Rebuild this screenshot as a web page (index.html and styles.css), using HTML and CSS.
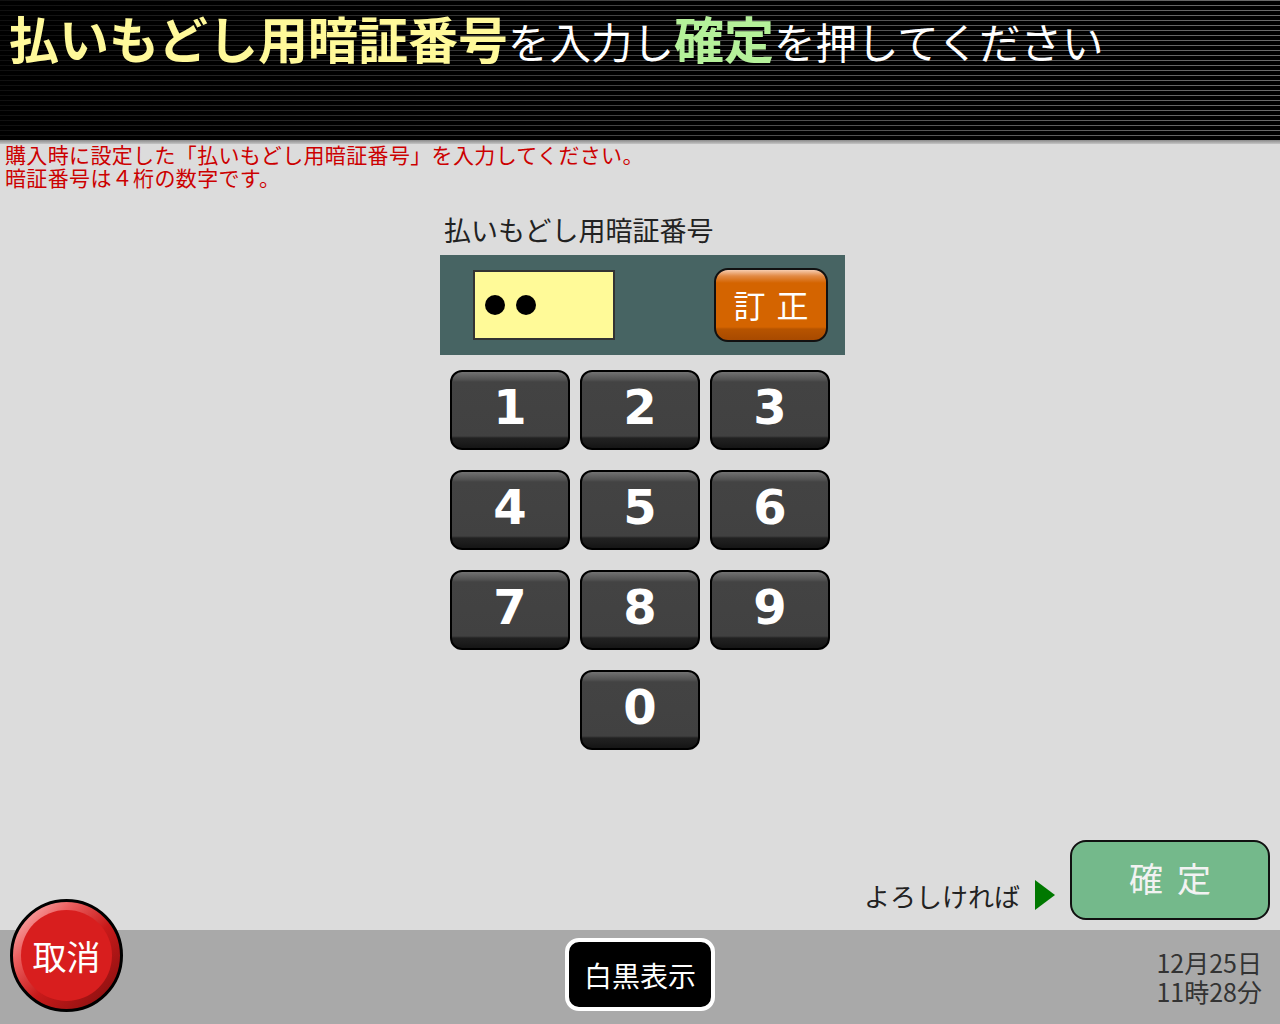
FILE: index.html
```html
<!DOCTYPE html>
<html lang="ja">
<head>
<meta charset="utf-8">
<title>払いもどし用暗証番号</title>
<link rel="stylesheet" href="styles.css">
</head>
<body>
<div class="screen">
  <header class="header">
    <h1 class="title"><span class="hl-y">払いもどし用暗証番号</span><span class="plain">を入力し</span><span class="hl-g">確定</span><span class="plain">を押してください</span></h1>
  </header>
  <div class="header-edge"></div>
  <main class="main">
    <p class="notice">購入時に設定した「払いもどし用暗証番号」を入力してください。<br>暗証番号は４桁の数字です。</p>
    <section class="pin">
      <div class="pin-label">払いもどし用暗証番号</div>
      <div class="pin-panel">
        <div class="pin-field"><span class="dot"></span><span class="dot"></span></div>
        <button class="btn-correct">訂正</button>
      </div>
      <div class="keypad">
        <button class="key">1</button>
        <button class="key">2</button>
        <button class="key">3</button>
        <button class="key">4</button>
        <button class="key">5</button>
        <button class="key">6</button>
        <button class="key">7</button>
        <button class="key">8</button>
        <button class="key">9</button>
        <button class="key key-zero">0</button>
      </div>
    </section>
    <div class="confirm-row">
      <span class="prompt">よろしければ</span>
      <span class="arrow"></span>
      <button class="btn-confirm">確定</button>
    </div>
  </main>
  <footer class="footer">
    <button class="btn-cancel"><span class="cancel-face">取消</span></button>
    <button class="btn-mono">白黒表示</button>
    <div class="datetime">12月25日<br>11時28分</div>
  </footer>
</div>
</body>
</html>
```

FILE: styles.css
```css
* { box-sizing: border-box; }
html, body { margin: 0; padding: 0; }
body {
  width: 1280px;
  height: 1024px;
  overflow: hidden;
  background: #dcdcdc;
  font-family: "Noto Sans CJK JP", "Noto Sans", sans-serif;
}
button {
  font-family: "Noto Sans CJK JP", "Noto Sans", sans-serif;
  margin: 0;
  cursor: pointer;
}
.screen {
  display: flex;
  flex-direction: column;
  height: 1024px;
}

/* header */
.header {
  flex: none;
  height: 140px;
  padding: 7px 0 0 9px;
  background:
    linear-gradient(to right, rgba(0,0,0,0.85) 0%, rgba(0,0,0,0.35) 50%, rgba(0,0,0,0) 100%),
    repeating-linear-gradient(to bottom, #6a6a6a 0 1px, #000 1px 5px);
}
.title {
  margin: 0;
  font-weight: normal;
  line-height: 60px;
  white-space: nowrap;
}
.hl-y, .hl-g {
  font-size: 50px;
  font-weight: 700;
}
.hl-y { color: #fff99a; }
.hl-g { color: #b5f19a; }
.plain {
  font-size: 41.5px;
  color: #ffffff;
}
.header-edge {
  flex: none;
  height: 4px;
  background: linear-gradient(to bottom, #8a8a8a, #c4c4c4);
}

/* main */
.main {
  flex: 1;
  min-height: 0;
  display: flex;
  flex-direction: column;
}
.notice {
  margin: -1px 0 0 5px;
  font-size: 21px;
  letter-spacing: 0.35px;
  line-height: 23px;
  color: #cc0000;
}
.pin {
  margin: 26px 0 0 440px;
  width: 405px;
}
.pin-label {
  padding-left: 4px;
  font-size: 27px;
  line-height: 30px;
  color: #222;
}
.pin-panel {
  margin-top: 10px;
  height: 100px;
  background: #476463;
  display: flex;
  align-items: center;
  justify-content: space-between;
  padding: 0 17px 0 33px;
}
.pin-field {
  width: 142px;
  height: 70px;
  border: 2px solid #333;
  background: #fffa98;
  display: flex;
  align-items: center;
  gap: 11px;
  padding-left: 10px;
}
.dot {
  width: 20px;
  height: 20px;
  border-radius: 50%;
  background: #000;
}
.btn-correct {
  width: 114px;
  height: 74px;
  border: 2px solid #111;
  border-radius: 14px;
  background: linear-gradient(to bottom, #f7cdb0 0, #e28a45 6px, #d46400 13px, #d46400 calc(100% - 13px), #b75400 calc(100% - 11px), #a84a00 100%);
  color: #fff;
  font-size: 32px;
  letter-spacing: 11px;
  padding: 0 0 2px 11px;
}
.keypad {
  margin: 15px 0 0 10px;
  display: grid;
  grid-template-columns: repeat(3, 120px);
  grid-auto-rows: 80px;
  column-gap: 10px;
  row-gap: 20px;
}
.key {
  border: 2px solid #000;
  border-radius: 12px;
  background: linear-gradient(to bottom, #727272 0, #505050 8px, #434343 10px, #414141 calc(100% - 12px), #222 calc(100% - 10px), #151515 100%);
  color: #fff;
  font-family: "DejaVu Sans", "Liberation Sans", sans-serif;
  font-weight: bold;
  font-size: 48px;
  padding: 0 0 6px;
  display: flex;
  align-items: center;
  justify-content: center;
}
.key-zero { grid-column: 2; }

.confirm-row {
  margin-top: auto;
  display: flex;
  justify-content: flex-end;
  align-items: flex-end;
  padding: 0 10px 10px 0;
}
.prompt {
  font-size: 26px;
  line-height: 30px;
  color: #222;
  margin-bottom: 9px;
}
.arrow {
  width: 0;
  height: 0;
  border-top: 15px solid transparent;
  border-bottom: 15px solid transparent;
  border-left: 20px solid #007800;
  margin: 0 15px 10px 15px;
}
.btn-confirm {
  width: 200px;
  height: 80px;
  border: 2px solid #111;
  border-radius: 16px;
  background: #74b98b;
  color: #f2f2f2;
  font-size: 34px;
  letter-spacing: 14px;
  padding: 0 0 5px 14px;
}

/* footer */
.footer {
  flex: none;
  height: 94px;
  position: relative;
  background: #a9a9a9;
  display: grid;
  grid-template-columns: 1fr auto 1fr;
  align-items: start;
  padding-top: 8px;
}
.btn-cancel {
  position: absolute;
  left: 10px;
  top: -31px;
  width: 113px;
  height: 113px;
  border-radius: 50%;
  border: 3px solid #000;
  padding: 8px;
  background: linear-gradient(135deg, #ffcaca 0%, #ec6060 28%, #c81a1a 55%, #7e0e0e 100%);
}
.cancel-face {
  display: flex;
  width: 100%;
  height: 100%;
  border-radius: 50%;
  background: #d81e1e;
  color: #fff;
  font-size: 34px;
  align-items: center;
  justify-content: center;
}
.btn-mono {
  grid-column: 2;
  width: 150px;
  height: 73px;
  background: #000;
  border: 4px solid #fff;
  border-radius: 14px;
  color: #fff;
  font-size: 28px;
  padding: 0;
}
.datetime {
  grid-column: 3;
  justify-self: end;
  margin: 10px 18px 0 0;
  font-size: 25px;
  line-height: 29px;
  color: #333;
  text-align: right;
}
```
